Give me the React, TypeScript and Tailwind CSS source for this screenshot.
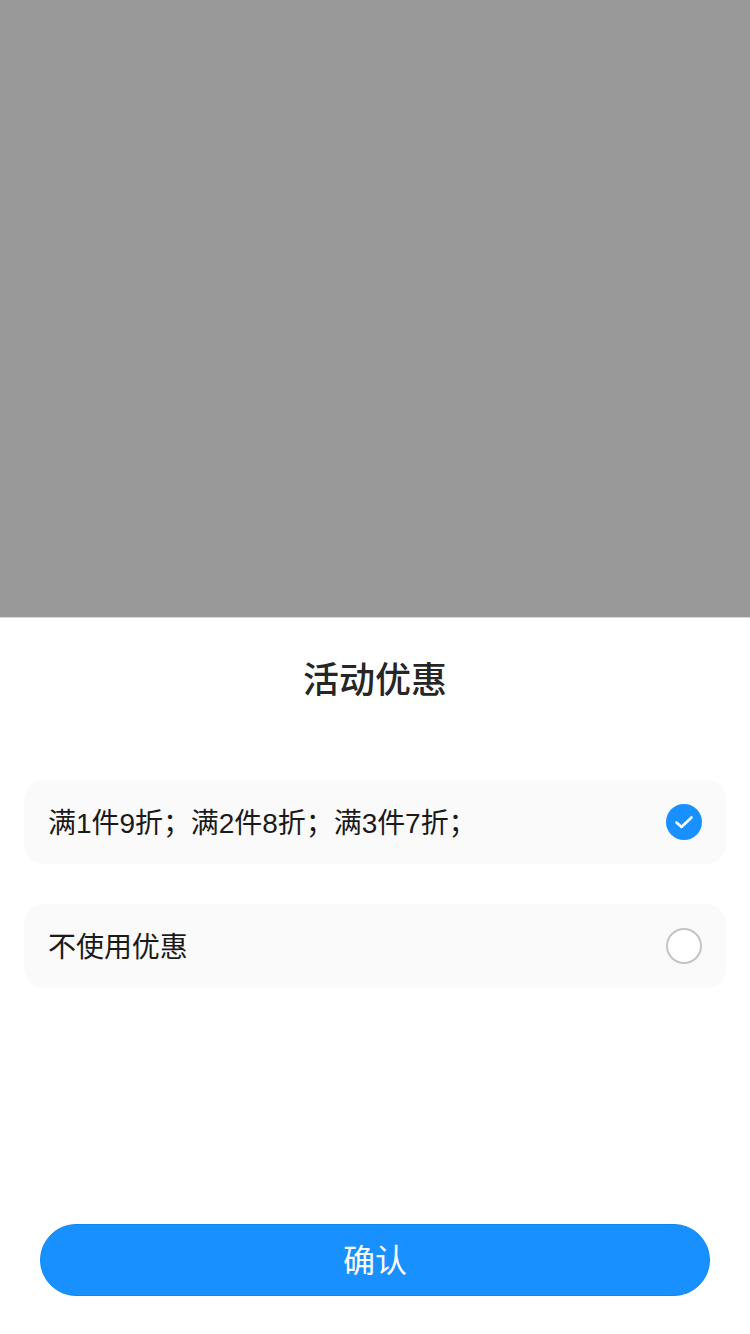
const font = { fontFamily: '"Liberation Sans", "Noto Sans CJK SC", sans-serif' };
function Row({ label, checked }: { label: string; checked: boolean }) {
  return (
    <div className="h-[84px] rounded-[20px] bg-[#fafafa] pl-[24px] pr-[24px] flex items-center justify-between">
      <span className="text-[28px] leading-[40px] mt-[3px] tracking-[-0.05px] text-[#1a1a1a] font-normal">{label}</span>
      {checked ? (
        <svg width="36" height="36" viewBox="0 0 36 36">
          <circle cx="18" cy="18" r="18" fill="#1890ff" />
          <path d="M10.5 18.5 L15.5 23 L25.5 13.5" fill="none" stroke="#fff" strokeWidth="2.6" strokeLinecap="round" strokeLinejoin="round" />
        </svg>
      ) : (
        <div className="w-9 h-9 rounded-full border-2 border-[#c4c4c4] bg-white" />
      )}
    </div>
  );
}
export default function App() {
  return (
    <div style={font} className="w-[750px] h-[1334px] flex flex-col bg-[#999999] overflow-hidden">
      <div className="h-[617px] shrink-0" />
      <div className="flex-1 bg-white border-t border-[#d9d9d9] flex flex-col px-6">
        <div className="h-[162px] shrink-0 pt-[41px] text-center text-[36px] leading-[44px] font-medium text-[#262626]">活动优惠</div>
        <div className="flex flex-col gap-10">
          <Row label="满1件9折；满2件8折；满3件7折；" checked />
          <Row label="不使用优惠" checked={false} />
        </div>
        <div className="mt-auto mb-[38px] mx-4 h-[72px] rounded-full border border-[#0f87f5] bg-[#1890ff] text-white text-[32px] font-normal pt-[1px] flex items-center justify-center">确认</div>
      </div>
    </div>
  );
}
